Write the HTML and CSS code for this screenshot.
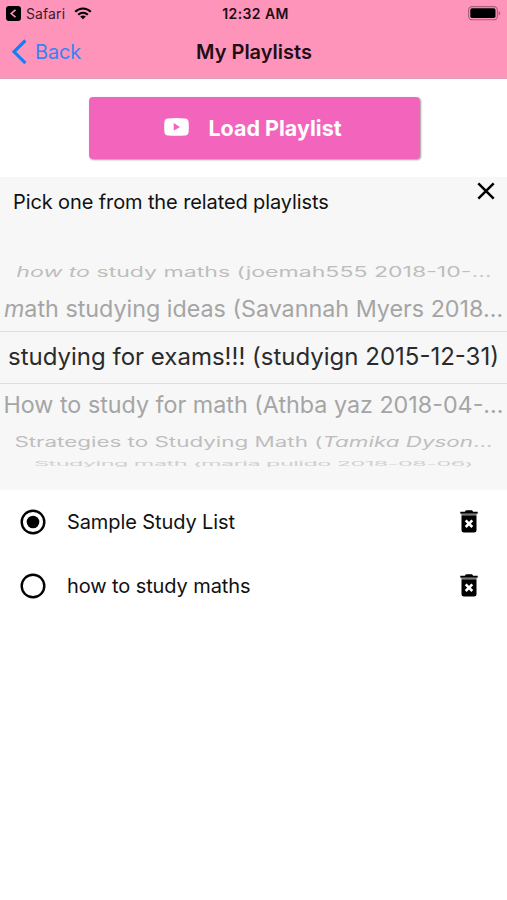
FILE: index.html
```html
<!DOCTYPE html>
<html lang="en">
<head>
<meta charset="utf-8">
<title>My Playlists</title>
<link rel="stylesheet" href="styles.css">
</head>
<body>
<header class="top">
  <div class="status">
    <div class="status-left">
      <svg width="15" height="15" viewBox="0 0 15 15"><rect width="15" height="15" rx="3"/><path d="M9.5 3.8 5.2 7.5l4.3 3.7" fill="none" stroke="#ff94bb" stroke-width="1.6"/></svg>
      <span class="app">Safari</span>
      <svg class="wifi" width="18" height="13" viewBox="0 0 18 13"><g fill="none" stroke="#000" stroke-width="2.2"><path d="M1.2 4.7C5.8.4 12.2.4 16.8 4.7"/><path d="M4.2 7.8C7 5.2 11 5.2 13.8 7.8"/></g><path d="M6.2 9.5C8 8 10 8 11.8 9.5L9 12.3z"/></svg>
    </div>
    <span class="clock">12:32 AM</span>
    <svg class="battery" width="33" height="15" viewBox="0 0 33 15"><rect x=".6" y=".6" width="28.8" height="13.2" rx="3.6" fill="none" stroke="#a75f7a" stroke-width="1.1"/><rect x="2.3" y="2.3" width="25.2" height="9.8" rx="1.8"/><path d="M30.7 5v4.5q1.5-.7 1.5-2.25T30.7 5z" fill="#a75f7a"/></svg>
  </div>
  <nav class="nav">
    <a class="back"><svg width="15" height="26" viewBox="0 0 15 26"><path d="M13.4 1.5 2 12.8l11.4 11.4" fill="none" stroke="#147efb" stroke-width="3.2"/></svg><span>Back</span></a>
    <h1>My Playlists</h1>
  </nav>
</header>
<main>
  <button class="load"><svg width="25" height="18" viewBox="0 0 25 18"><path fill="#fff" fill-rule="evenodd" d="M4 .5Q12.500-.3 21 .5 24.300.6 24.600 4 25 9 24.600 14 24.300 17.300 21 17.500 12.500 18.200 4 17.500.7 17.300.4 14 0 9 .4 4 .7.600 4 .500zM9.700 5v7.800l6.300-3.900z"/></svg><span>Load Playlist</span></button>
  <section class="picker">
    <div class="picker-head">
      <p>Pick one from the related playlists</p>
      <svg width="18" height="18" viewBox="0 0 18 18"><path d="M1.300 1.300 16.700 16.700M16.700 1.300 1.300 16.700" stroke="#000" stroke-width="2.500"/></svg>
    </div>
    <div class="wheel">
      <div class="row far up"><span><i>how to</i> study maths (joemah555 2018-10-…</span></div>
      <div class="row near prev"><span><i>m</i>ath studying ideas (Savannah Myers 2018…</span></div>
      <div class="row selected"><span>studying for exams!!! (studyign 2015-12-31)</span></div>
      <div class="row near next"><span>How to study for math (Athba yaz 2018-04-…</span></div>
      <div class="row far down"><span>Strategies to Studying Math (<i>Tamika Dyson</i>…</span></div>
      <div class="row edge"><span>Studying math (maria pulido 2018-08-06)</span></div>
    </div>
  </section>
  <ul class="lists">
    <li><svg class="radio" width="26" height="26" viewBox="0 0 26 26"><circle cx="13" cy="13" r="11.300" fill="none" stroke="#000" stroke-width="2.400"/><circle cx="13" cy="13" r="6.300"/></svg><span>Sample Study List</span>
      <svg class="trash" width="18" height="23" viewBox="0 0 18 23"><path d="M.3 1.800h4.500L6 .300h6l1.200 1.500h4.500v2H.3z"/><path d="M1.500 5.200h15V20q0 2.500-2.500 2.500H4Q1.500 22.500 1.500 20z"/><path d="M1.500 4.500h15" stroke="#777" stroke-width="1.400"/><path d="m5.700 10.400 6.600 6.600m0-6.600L5.700 17" stroke="#fff" stroke-width="2.600"/></svg></li>
    <li><svg class="radio" width="26" height="26" viewBox="0 0 26 26"><circle cx="13" cy="13" r="11.300" fill="none" stroke="#000" stroke-width="2.400"/></svg><span>how to study maths</span>
      <svg class="trash" width="18" height="23" viewBox="0 0 18 23"><path d="M.3 1.800h4.500L6 .300h6l1.200 1.500h4.500v2H.3z"/><path d="M1.500 5.200h15V20q0 2.500-2.500 2.500H4Q1.500 22.500 1.500 20z"/><path d="M1.500 4.500h15" stroke="#777" stroke-width="1.400"/><path d="m5.700 10.400 6.600 6.600m0-6.600L5.700 17" stroke="#fff" stroke-width="2.600"/></svg></li>
  </ul>
</main>
</body>
</html>
```
FILE: styles.css
```css
* { box-sizing: border-box; }
body { margin: 0; background: #fff; color: #111; font-family: Inter, "Liberation Sans", sans-serif; overflow: hidden; }
svg { display: block; flex: none; }
span { white-space: nowrap; }
.top { height: 79px; background: #ff94bb; border-bottom: 1px solid #dc9fb5; }
.status { height: 27px; padding: 0 6px; display: grid; grid-template-columns: 1fr auto 1fr; align-items: center; }
.status-left { display: flex; align-items: center; }
.app { font-size: 14px; margin-left: 5px; letter-spacing: .1px; color: #3b1b28; }
.wifi { margin-left: 9px; }
.clock { font-size: 14px; font-weight: 600; letter-spacing: .4px; margin-left: 4px; color: #200d15; }
.battery { justify-self: end; }
.nav { height: 51px; padding: 0 12px; display: grid; grid-template-columns: 1fr auto 1fr; align-items: center; }
.back { display: flex; align-items: center; gap: 8px; color: #3a82f0; font-size: 20px; letter-spacing: -.2px; }
.back svg { margin-top: -2px; }
.back span { margin-top: -1px; }
h1 { margin: -2px 0 0 1px; font-size: 20px; font-weight: 600; color: #210d15; }
.load { display: flex; width: 331px; height: 62px; margin: 18px auto 18px 89px; padding: 0 3px 0 0; border: 0; border-radius: 4px; background: #f365bc; box-shadow: 1px 1px 2px #a99; align-items: center; justify-content: center; gap: 19px; color: #fff; font: 700 21.5px Inter, sans-serif; }
.load svg { margin-bottom: 3px; }
.picker { height: 313px; background: #f7f7f7; }
.picker-head { height: 74px; padding: 5px 12px 0 13px; display: flex; justify-content: space-between; }
.picker-head p { margin: 8px 0 0; font-size: 20px; line-height: 25px; letter-spacing: -.11px; }
.wheel { height: 239px; padding-top: 7px; }
.row { display: flex; justify-content: center; align-items: center; }
.row span { flex: none; }
.far { height: 28px; font-size: 20px; color: #bebebe; }
.up span { transform: scale(1.154, .7); }
.down span { transform: scale(1.12, .7); }
.near { height: 45px; font-size: 23.3px; color: #a5a5a5; }
.near span { transform: scaleY(.96); }
.next { height: 40px; }
.selected { height: 53px; font-size: 24px; color: #2b2b2b; border: solid #dedede; border-width: 1px 0; padding-bottom: 2px; }
.down { height: 36px; }
.edge { height: 8px; font-size: 20px; line-height: 24px; color: #d0d0d0; }
.edge span { transform: scale(1.177, .28); letter-spacing: -.5px; }
.lists { list-style: none; margin: 0; padding: 0; }
.lists li { height: 64px; padding: 0 29px 0 20px; display: flex; align-items: center; }
.radio { margin-bottom: 1px; }
.trash { margin-bottom: 1px; }
.lists span { margin-left: 21px; flex: 1; font-size: 20px; letter-spacing: -.1px; }
```
